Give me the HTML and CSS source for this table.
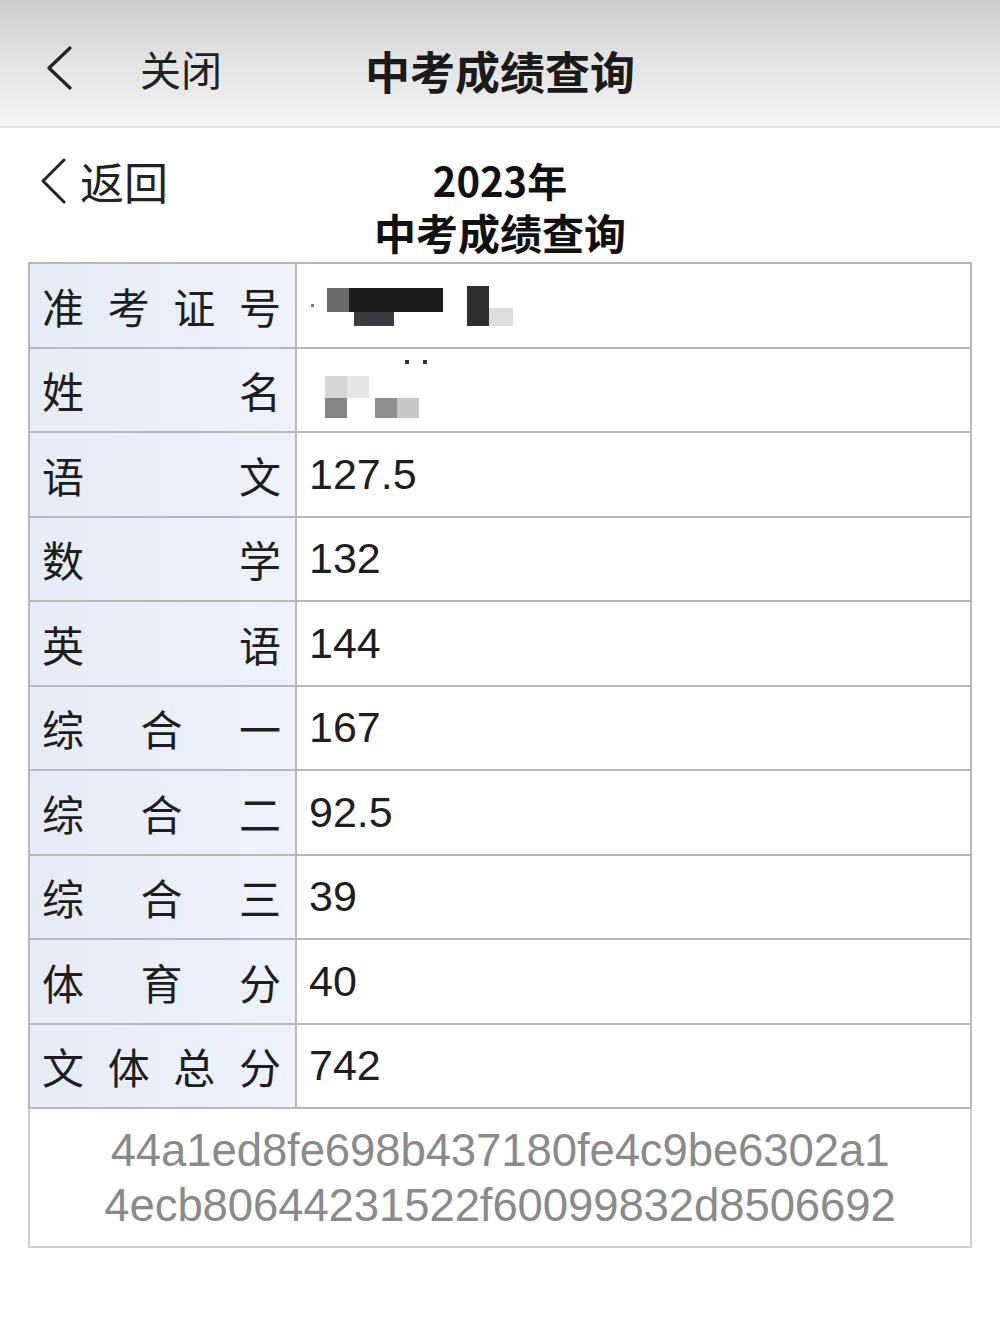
FILE: index.html
```html
<!DOCTYPE html>
<html lang="zh-CN">
<head>
<meta charset="utf-8">
<title>中考成绩查询</title>
<link rel="stylesheet" href="styles.css">
</head>
<body>
<header class="navbar">
  <svg class="nav-back" width="30" height="44" viewBox="0 0 30 44"><path d="M26 2 L5 22 L26 42" fill="none" stroke="#222" stroke-width="3.2" stroke-linecap="round" stroke-linejoin="round"/></svg>
  <span class="nav-close">关闭</span>
  <span class="nav-title">中考成绩查询</span>
</header>
<main class="page">
  <div class="page-head">
    <a class="back-link">
      <svg width="30" height="46" viewBox="0 0 30 46"><path d="M26 2 L5 23 L26 44" fill="none" stroke="#222" stroke-width="3" stroke-linecap="round" stroke-linejoin="round"/></svg>
      <span>返回</span>
    </a>
    <h1 class="page-title"><span class="t1">2023年</span><span class="t2">中考成绩查询</span></h1>
  </div>
  <table class="score-table">
    <tr><th>准考证号</th><td><span class="mask mask-id"><i class="m0"></i><i class="m1"></i><i class="m2"></i><i class="m3"></i><i class="m4"></i><i class="m5"></i></span></td></tr>
    <tr><th>姓名</th><td><span class="mask mask-name"><i class="d1"></i><i class="d2"></i><i class="n1"></i><i class="n4"></i><i class="n2"></i><i class="n3"></i><i class="n5"></i></span></td></tr>
    <tr><th>语文</th><td>127.5</td></tr>
    <tr><th>数学</th><td>132</td></tr>
    <tr><th>英语</th><td>144</td></tr>
    <tr><th>综合一</th><td>167</td></tr>
    <tr><th>综合二</th><td>92.5</td></tr>
    <tr><th>综合三</th><td>39</td></tr>
    <tr><th>体育分</th><td>40</td></tr>
    <tr><th>文体总分</th><td>742</td></tr>
    <tr><td class="hash" colspan="2">44a1ed8fe698b437180fe4c9be6302a1<br>4ecb80644231522f60099832d8506692</td></tr>
  </table>
</main>
</body>
</html>
```
FILE: styles.css
```css
* { box-sizing: border-box; }
html, body { margin: 0; padding: 0; background: #fff; }
body {
  font-family: "Noto Sans CJK SC", "Liberation Sans", sans-serif;
  color: #1e1e1e;
  width: 1000px;
}
.navbar {
  height: 128px;
  background: linear-gradient(#cdcdcd 0%, #e2e2e2 45%, #f3f3f3 100%);
  border-bottom: 2px solid #e6e6e6;
  display: flex;
  align-items: center;
  position: relative;
  padding-left: 44px;
  padding-top: 10px;
}
.nav-back { margin-top: 0; }
.nav-close {
  font-size: 41px;
  margin-left: 66px;
  color: #222;
  line-height: 1;
}
.nav-title {
  position: absolute;
  left: 0; right: 0;
  top: 48px;
  text-align: center;
  font-size: 45px;
  font-weight: 700;
  color: #1a1a1a;
  line-height: 45px;
  pointer-events: none;
}
.page {
  padding: 0 28px;
}
.page-head {
  position: relative;
  height: 134px;
  padding-top: 30px;
}
.back-link {
  display: flex;
  align-items: center;
  gap: 12px;
  margin-left: 10px;
  font-size: 44px;
  color: #222;
  line-height: 1;
}
.page-title {
  position: absolute;
  left: 0; right: 0; top: 27px;
  margin: 0;
  text-align: center;
  font-weight: 700;
  color: #111;
}
.page-title span { display: block; }
.t1 { font-size: 40px; line-height: 50px; }
.t2 { font-size: 42px; line-height: 54px; }
.score-table {
  width: 944px;
  border-collapse: collapse;
  border: 2px solid #c6c6c6;
}
.score-table th, .score-table td {
  border: 2px solid #b8b8b8;
  height: 84.5px;
  padding: 0;
}
.score-table th {
  width: 267px;
  background: linear-gradient(90deg, #e6ecf7, #edf2fb);
  font-weight: 400;
  font-size: 42px;
  text-align: justify;
  text-align-last: justify;
  padding: 0 14px 0 12px;
  color: #1e1e1e;
}
.score-table td {
  font-family: "Liberation Sans", "Noto Sans CJK SC", sans-serif;
  font-size: 43px;
  padding-left: 12px;
  color: #1e1e1e;
}
.score-table td.hash {
  height: 139px;
  padding: 0;
  text-align: center;
  font-size: 45.5px;
  line-height: 55px;
  color: #8a8a8a;
  letter-spacing: -0.1px;
  border-color: #cfcfcf;
}
.mask { display: inline-block; position: relative; vertical-align: middle; }
.mask i { position: absolute; display: block; }
.mask-id { width: 220px; height: 50px; }
.m0 { left: 2px; top: 22px; width: 3px; height: 3px; background: #777; }
.m1 { left: 18px; top: 6px; width: 22px; height: 24px; background: #6a6a6a; }
.m2 { left: 40px; top: 6px; width: 94px; height: 24px; background: #1d1d1d; }
.m3 { left: 45px; top: 30px; width: 40px; height: 14px; background: #3b3a42; }
.m4 { left: 158px; top: 4px; width: 22px; height: 40px; background: #2e2e2e; }
.m5 { left: 180px; top: 26px; width: 24px; height: 18px; background: #ddd; }
.mask-name { width: 200px; height: 64px; }
.d1 { left: 96px; top: 2px; width: 4px; height: 4px; background: #333; }
.d2 { left: 114px; top: 2px; width: 4px; height: 4px; background: #333; }
.n1 { left: 16px; top: 18px; width: 22px; height: 22px; background: #d6d6d6; }
.n4 { left: 38px; top: 18px; width: 22px; height: 22px; background: #e6e6e6; }
.n2 { left: 16px; top: 40px; width: 22px; height: 20px; background: #858585; }
.n3 { left: 66px; top: 40px; width: 22px; height: 20px; background: #8e8e8e; }
.n5 { left: 88px; top: 40px; width: 22px; height: 20px; background: #c6c6c6; }
```
